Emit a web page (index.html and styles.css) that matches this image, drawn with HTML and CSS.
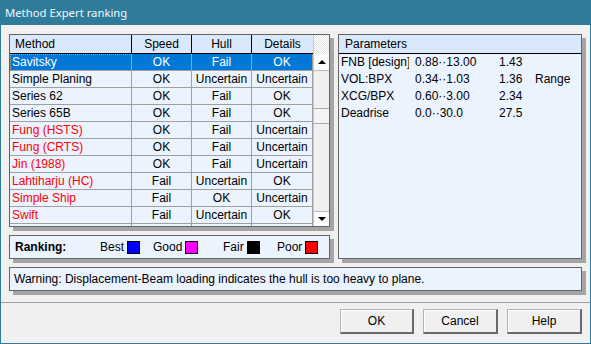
FILE: index.html
```html
<!DOCTYPE html>
<html lang="en">
<head>
    <meta charset="UTF-8">
    <title>Method Expert ranking</title>
    <link rel="stylesheet" href="styles.css">
</head>
<body>
    <div class="window">
        <div class="titlebar">Method Expert ranking</div>

        <div class="client">
            <div class="top">
                <div class="left-col">
                    <!-- ranking list -->
                    <div class="listbox">
                        <div class="grid">
                            <div class="hcell first">Method</div>
                            <div class="hcell">Speed</div>
                            <div class="hcell">Hull</div>
                            <div class="hcell last">Details</div>

                            <div class="cell first sel focus">Savitsky</div>
                            <div class="cell sel">OK</div>
                            <div class="cell sel">Fail</div>
                            <div class="cell sel">OK</div>

                            <div class="cell first">Simple Planing</div>
                            <div class="cell">OK</div>
                            <div class="cell">Uncertain</div>
                            <div class="cell">Uncertain</div>

                            <div class="cell first">Series 62</div>
                            <div class="cell">OK</div>
                            <div class="cell">Fail</div>
                            <div class="cell">OK</div>

                            <div class="cell first">Series 65B</div>
                            <div class="cell">OK</div>
                            <div class="cell">Fail</div>
                            <div class="cell">OK</div>

                            <div class="cell first poor">Fung (HSTS)</div>
                            <div class="cell">OK</div>
                            <div class="cell">Fail</div>
                            <div class="cell">Uncertain</div>

                            <div class="cell first poor">Fung (CRTS)</div>
                            <div class="cell">OK</div>
                            <div class="cell">Fail</div>
                            <div class="cell">Uncertain</div>

                            <div class="cell first poor">Jin (1988)</div>
                            <div class="cell">OK</div>
                            <div class="cell">Fail</div>
                            <div class="cell">Uncertain</div>

                            <div class="cell first poor">Lahtiharju (HC)</div>
                            <div class="cell">Fail</div>
                            <div class="cell">Uncertain</div>
                            <div class="cell">OK</div>

                            <div class="cell first poor">Simple Ship</div>
                            <div class="cell">Fail</div>
                            <div class="cell">OK</div>
                            <div class="cell">Uncertain</div>

                            <div class="cell first poor">Swift</div>
                            <div class="cell">Fail</div>
                            <div class="cell">Uncertain</div>
                            <div class="cell">OK</div>

                            <div class="cell first"></div>
                            <div class="cell"></div>
                            <div class="cell"></div>
                            <div class="cell"></div>
                        </div>

                        <div class="scrollbar">
                            <div class="sb-corner"></div>
                            <div class="sb-btn"><span class="arrow up"></span></div>
                            <div class="sb-track">
                                <div class="sb-thumb"></div>
                            </div>
                            <div class="sb-btn"><span class="arrow down"></span></div>
                        </div>
                    </div>

                    <!-- legend -->
                    <div class="legend">
                        <div class="legend-title">Ranking:</div>
                        <div class="legend-item w-best">Best <span class="swatch best"></span></div>
                        <div class="legend-item w-good">Good <span class="swatch good"></span></div>
                        <div class="legend-item w-fair">Fair <span class="swatch fair"></span></div>
                        <div class="legend-item">Poor <span class="swatch poor"></span></div>
                    </div>
                </div>

                <!-- parameters -->
                <div class="params">
                    <div class="params-head">Parameters</div>
                    <div class="params-grid">
                        <div class="pname"><span>FNB [design]</span></div>
                        <div>0.88··13.00</div>
                        <div>1.43</div>
                        <div></div>

                        <div class="pname"><span>VOL:BPX</span></div>
                        <div>0.34··1.03</div>
                        <div>1.36</div>
                        <div>Range</div>

                        <div class="pname"><span>XCG/BPX</span></div>
                        <div>0.60··3.00</div>
                        <div>2.34</div>
                        <div></div>

                        <div class="pname"><span>Deadrise</span></div>
                        <div>0.0··30.0</div>
                        <div>27.5</div>
                        <div></div>
                    </div>
                </div>
            </div>

            <div class="warning">Warning: Displacement-Beam loading indicates the hull is too heavy to plane.</div>

            <div class="separator"></div>

            <div class="buttons">
                <button class="btn btn-ok">OK</button>
                <button class="btn">Cancel</button>
                <button class="btn">Help</button>
            </div>
        </div>
    </div>
</body>
</html>
```

FILE: styles.css
```css
:root {
    --frame: #2e7c9a;
    --face: #f0f0f0;
    --pane: #ebf3fe;
    --head: #d9e8fb;
    --edge: #646464;
    --shadow: #a5a5a5;
    --grid: #a0a0a0;
    --select: #0078d7;
}

* {
    box-sizing: border-box;
}

body {
    margin: 0;
    font-family: 'Liberation Sans', Arial, sans-serif;
    font-size: 12px;
    color: #000;
    background: var(--face);
}

.window {
    width: 591px;
    height: 344px;
    border: 1px solid var(--frame);
    border-top: none;
    background: var(--face);
    display: flex;
    flex-direction: column;
}

.titlebar {
    height: 25px;
    margin: 0 -1px;
    padding-left: 5px;
    background: var(--frame);
    color: #f2f7fa;
    font-family: 'Noto Sans', 'Open Sans', sans-serif;
    font-size: 11.3px;
    line-height: 25px;
}

.client {
    padding: 9px 8px 0 8px;
    display: flex;
    flex-direction: column;
}

.top {
    display: flex;
    gap: 8px;
}

.left-col {
    display: flex;
    flex-direction: column;
    gap: 8px;
}

/* list box */
.listbox {
    width: 321px;
    height: 193px;
    border: 1px solid var(--edge);
    background: var(--pane);
    box-shadow: 4px 4px 0 var(--shadow);
    display: flex;
    overflow: hidden;
}

.grid {
    display: grid;
    grid-template-columns: 122px 60px 60px 61px;
    grid-auto-rows: 17px;
    grid-template-rows: 19px;
    width: 303px;
    align-content: start;
}

.hcell {
    background: var(--head);
    border-right: 1px solid #000;
    border-bottom: 1px solid #000;
    text-align: center;
    line-height: 18px;
}

.hcell.first {
    text-align: left;
    padding-left: 5px;
}

.hcell.last {
    border-right: none;
}

.cell {
    border-right: 1px solid var(--grid);
    border-bottom: 1px solid var(--grid);
    text-align: center;
    line-height: 16px;
    white-space: nowrap;
    overflow: hidden;
}

.cell.first {
    text-align: left;
    padding-left: 2px;
}

.cell.poor {
    color: #f00;
}

.cell.sel {
    background: var(--select);
    color: #fff;
}

.cell.focus {
    outline: 1px dotted #e59a3c;
    outline-offset: -1px;
}

/* scroll bar */
.scrollbar {
    width: 16px;
    display: flex;
    flex-direction: column;
    border-left: 1px solid #c8c8c8;
    background: var(--face);
}

.sb-corner {
    height: 19px;
    background-color: #fff;
    background-image: repeating-conic-gradient(#e4e4e4 0 25%, #fff 0 50%);
    background-size: 2px 2px;
}

.sb-btn {
    height: 17px;
    background: #fcfcfc;
    border-bottom: 1px solid #bdbdbd;
    display: flex;
    align-items: center;
    justify-content: center;
}

.sb-btn:last-child {
    border-bottom: none;
    border-top: 1px solid #bdbdbd;
    height: 15px;
}

.arrow {
    width: 0;
    height: 0;
    border-left: 4px solid transparent;
    border-right: 4px solid transparent;
}

.arrow.up {
    border-bottom: 4px solid #000;
}

.arrow.down {
    border-top: 4px solid #000;
}

.sb-track {
    flex: 1;
    padding-top: 37px;
}

.sb-thumb {
    height: 16px;
    background: #f4f4f4;
    border-top: 1px solid #a8a8a8;
    border-bottom: 1px solid #a8a8a8;
}

/* legend */
.legend {
    width: 321px;
    height: 24px;
    border: 1px solid var(--edge);
    background: var(--pane);
    box-shadow: 4px 4px 0 var(--shadow);
    display: flex;
    align-items: center;
    padding-left: 5px;
}

.legend-title {
    font-weight: bold;
    width: 85px;
}

.legend-item {
    display: flex;
    align-items: center;
    gap: 3px;
}

.w-best { width: 53px; }
.w-good { width: 70px; }
.w-fair { width: 54px; }

.swatch {
    width: 13px;
    height: 13px;
    border: 1px solid #000;
}

.swatch.best { background: #0000ff; }
.swatch.good { background: #ff00ff; }
.swatch.fair { background: #000; }
.swatch.poor { background: #ff0000; }

/* parameters */
.params {
    width: 244px;
    height: 225px;
    border: 1px solid var(--edge);
    background: var(--pane);
    box-shadow: 4px 4px 0 var(--shadow);
}

.params-head {
    height: 19px;
    background: var(--head);
    border-bottom: 1px solid #000;
    padding-left: 6px;
    line-height: 18px;
}

.params-grid {
    display: grid;
    grid-template-columns: 74px 84px 36px auto;
    grid-auto-rows: 17px;
    line-height: 17px;
    padding-left: 2px;
    white-space: nowrap;
}

/* the name column is clipped, as in the original control */
.pname span {
    display: block;
    width: 68px;
    overflow: hidden;
}

/* warning line */
.warning {
    margin-top: 8px;
    width: 573px;
    height: 24px;
    border: 1px solid var(--edge);
    background: var(--pane);
    box-shadow: 4px 4px 0 var(--shadow);
    padding-left: 4px;
    line-height: 22px;
}

.separator {
    margin: 11px -8px 0 -8px;
    height: 1px;
    background: var(--grid);
}

.buttons {
    margin-top: 6px;
    display: flex;
    justify-content: flex-end;
    gap: 9px;
}

.btn {
    width: 75px;
    height: 25px;
    background: var(--face);
    font-family: 'Liberation Sans', Arial, sans-serif;
    font-size: 12px;
    color: #000;
    border-top: 1px solid #b4b4b4;
    border-left: 1px solid #b4b4b4;
    border-right: 2px solid #6a6a6a;
    border-bottom: 2px solid #6a6a6a;
    box-shadow: inset 1px 1px 0 #fff;
    padding: 0;
}

.btn-ok {
    width: 74px;
}
```
